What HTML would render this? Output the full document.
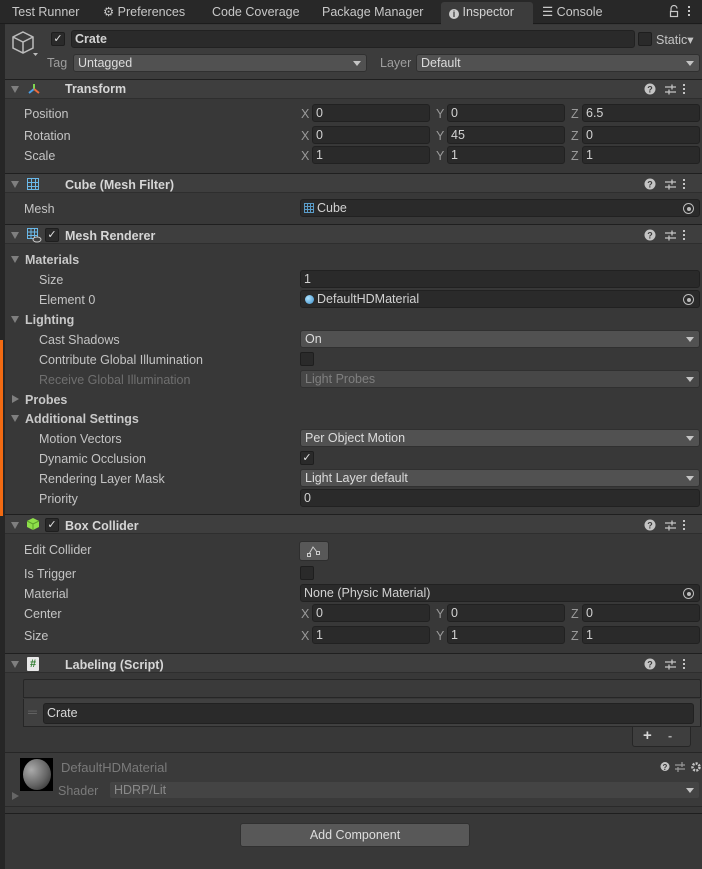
<!DOCTYPE html>
<html><head><meta charset="utf-8"><style>
*{margin:0;padding:0;box-sizing:border-box}
body{width:702px;height:869px;background:#383838;font-family:"Liberation Sans",sans-serif;font-size:12.5px;color:#c4c4c4;position:relative;overflow:hidden}
.a{position:absolute}
.t{position:absolute;white-space:nowrap;line-height:16px}
.b{font-weight:bold;color:#d6d6d6}
.f{position:absolute;height:18px;background:#2a2a2a;border:1px solid #212121;border-radius:3px;padding-left:3px;line-height:16px;color:#d2d2d2;white-space:nowrap}
.d{position:absolute;height:18px;background:#515151;border:1px solid #303030;border-radius:3px;padding-left:4px;line-height:16px;color:#dcdcdc;white-space:nowrap}
.d:after{content:"";position:absolute;right:5px;top:6px;border-left:4px solid transparent;border-right:4px solid transparent;border-top:5px solid #c4c4c4}
.h{position:absolute;left:5px;right:0;height:20px;background:#3e3e3e;border-top:1px solid #1f1f1f;border-bottom:1px solid #2e2e2e}
.tri{position:absolute;width:0;height:0;border-left:4px solid transparent;border-right:4px solid transparent;border-top:7px solid #7f7f7f}
.trr{position:absolute;width:0;height:0;border-top:4px solid transparent;border-bottom:4px solid transparent;border-left:7px solid #7f7f7f}
.cb{position:absolute;width:14px;height:14px;background:#2a2a2a;border:1px solid #1e1e1e;border-radius:2px;color:#e0e0e0;font-size:11px;line-height:12px;text-align:center}
.ic{position:absolute;left:644px}
.xl{position:absolute;color:#9a9a9a;line-height:16px}
.tgt{position:absolute;right:5px;top:3px;width:11px;height:11px;border:1px solid #bbb;border-radius:50%}
.tgt:after{content:"";position:absolute;left:2.5px;top:2.5px;width:4px;height:4px;background:#bbb;border-radius:50%}
</style></head><body>
<svg width="0" height="0" style="position:absolute"><defs>
<g id="hi"><circle cx="6" cy="6" r="5.5" fill="#c4c4c4"/><text x="6" y="9.5" font-family="Liberation Sans" font-size="9" font-weight="bold" fill="#3e3e3e" text-anchor="middle">?</text>
<g stroke="#c4c4c4" stroke-width="1.3"><path d="M21 4H32M21 9H32M28 1.5V6.5M25 6.5V11.5"/></g>
<g fill="#c4c4c4"><rect x="39" y="1" width="2" height="2"/><rect x="39" y="5" width="2" height="2"/><rect x="39" y="9" width="2" height="2"/></g></g>
</defs></svg>
<div class="a" style="left:0;top:24px;width:5px;height:845px;background:#262626"></div>
<div class="a" style="left:0;top:340px;width:3px;height:176px;background:#f26a12"></div>
<div class="a" style="left:0;top:0;width:702px;height:24px;background:#282828;border-bottom:1px solid #1c1c1c"></div>
<div class="t" style="left:12px;top:4px;color:#c8c8c8">Test Runner</div>
<div class="t" style="left:103px;top:4px;color:#c8c8c8">⚙ Preferences</div>
<div class="t" style="left:212px;top:4px;color:#c8c8c8">Code Coverage</div>
<div class="t" style="left:322px;top:4px;color:#c8c8c8">Package Manager</div>
<div class="a" style="left:441px;top:2px;width:92px;height:23px;background:#3c3c3c;border-radius:3px 3px 0 0"></div>
<div class="t" style="left:449px;top:4px;color:#d4d4d4"><span style="display:inline-block;width:10px;height:10px;border-radius:50%;background:#ccc;color:#3c3c3c;font-size:9px;line-height:10px;text-align:center;font-weight:bold;vertical-align:-1px">i</span> Inspector</div>
<div class="t" style="left:542px;top:4px;color:#c8c8c8">☰ Console</div>
<svg class="a" style="left:669px;top:5px" width="30" height="14" fill="none" stroke="#c8c8c8" stroke-width="1.2"><path d="M2 6V3.5a3 3 0 0 1 6 0"/><rect x="1.5" y="6.5" width="7" height="5"/><g fill="#c8c8c8" stroke="none"><rect x="19" y="1" width="2" height="2"/><rect x="19" y="5" width="2" height="2"/><rect x="19" y="9" width="2" height="2"/></g></svg>
<div class="a" style="left:5px;top:25px;width:697px;height:55px;background:#3c3c3c"></div>
<svg class="a" style="left:11px;top:30px" width="28" height="28" viewBox="0 0 28 28" fill="none" stroke="#bcbcbc" stroke-width="1.5"><path d="M12 2 L22 7 L22 18 L12 23 L2 18 L2 7 Z M2 7 L12 12 L22 7 M12 12 L12 23"/><path d="M22 23 l5 0 l-2.5 3z" fill="#bcbcbc" stroke="none"/></svg>
<div class="cb" style="left:51px;top:32px">✓</div>
<div class="f" style="left:71px;top:30px;width:564px;font-weight:bold">Crate</div>
<div class="cb" style="left:638px;top:32px"></div>
<div class="t" style="left:656px;top:32px;color:#c4c4c4">Static▾</div>
<div class="t" style="left:47px;top:55px;color:#9e9e9e">Tag</div>
<div class="d" style="left:73px;top:54px;width:294px">Untagged</div>
<div class="t" style="left:380px;top:55px;color:#9e9e9e">Layer</div>
<div class="d" style="left:416px;top:54px;width:284px">Default</div>
<!-- Transform -->
<div class="h" style="top:79px"></div>
<div class="tri" style="left:11px;top:86px"></div>
<svg class="a" style="left:27px;top:82px" width="14" height="14"><path d="M7 2 L7 7" stroke="#7fd650" stroke-width="2"/><path d="M7 7 L2 11" stroke="#4aa0e8" stroke-width="2"/><path d="M7 7 L12 11" stroke="#ee6c3c" stroke-width="2"/></svg>
<div class="t b" style="left:65px;top:81px">Transform</div>
<svg class="ic" style="top:83px" width="44" height="12"><use href="#hi"/></svg>
<div class="t" style="left:24px;top:106px">Position</div>
<div class="t" style="left:24px;top:128px">Rotation</div>
<div class="t" style="left:24px;top:148px">Scale</div>
<div class="xl" style="left:301px;top:106px">X</div><div class="f" style="left:312px;top:104px;width:118px">0</div>
<div class="xl" style="left:436px;top:106px">Y</div><div class="f" style="left:447px;top:104px;width:118px">0</div>
<div class="xl" style="left:571px;top:106px">Z</div><div class="f" style="left:582px;top:104px;width:118px">6.5</div>
<div class="xl" style="left:301px;top:128px">X</div><div class="f" style="left:312px;top:126px;width:118px">0</div>
<div class="xl" style="left:436px;top:128px">Y</div><div class="f" style="left:447px;top:126px;width:118px">45</div>
<div class="xl" style="left:571px;top:128px">Z</div><div class="f" style="left:582px;top:126px;width:118px">0</div>
<div class="xl" style="left:301px;top:148px">X</div><div class="f" style="left:312px;top:146px;width:118px">1</div>
<div class="xl" style="left:436px;top:148px">Y</div><div class="f" style="left:447px;top:146px;width:118px">1</div>
<div class="xl" style="left:571px;top:148px">Z</div><div class="f" style="left:582px;top:146px;width:118px">1</div>
<!-- Mesh Filter -->
<div class="h" style="top:173px"></div>
<div class="tri" style="left:11px;top:181px"></div>
<svg class="a" style="left:26px;top:177px" width="14" height="14" fill="none" stroke="#6ab8e8" stroke-width="1"><rect x="1.5" y="1.5" width="11" height="11"/><path d="M5.5 1.5V12.5M9.5 1.5V12.5M1.5 5.5H12.5M1.5 9.5H12.5"/></svg>
<div class="t b" style="left:65px;top:177px">Cube (Mesh Filter)</div>
<svg class="ic" style="top:178px" width="44" height="12"><use href="#hi"/></svg>
<div class="t" style="left:24px;top:201px">Mesh</div>
<div class="f" style="left:300px;top:199px;width:400px;padding-left:16px"><svg class="a" style="left:3px;top:3px" width="10" height="10" fill="none" stroke="#5a9cc8" stroke-width="1"><rect x=".5" y=".5" width="9" height="9"/><path d="M3.5 0V10M6.5 0V10M0 3.5H10M0 6.5H10"/></svg>Cube<div class="tgt"></div></div>
<!-- Mesh Renderer -->
<div class="h" style="top:224px"></div>
<div class="tri" style="left:11px;top:232px"></div>
<svg class="a" style="left:26px;top:227px" width="16" height="16" fill="none" stroke="#6ab8e8" stroke-width="1"><rect x="1.5" y="1.5" width="10" height="10"/><path d="M5 1.5V11.5M8.5 1.5V11.5M1.5 5H11.5M1.5 8.5H11.5"/><ellipse cx="11" cy="12.5" rx="4" ry="2.5" stroke="#ccc" fill="#3e3e3e"/></svg>
<div class="cb" style="left:45px;top:228px">✓</div>
<div class="t b" style="left:65px;top:228px">Mesh Renderer</div>
<svg class="ic" style="top:229px" width="44" height="12"><use href="#hi"/></svg>
<div class="tri" style="left:11px;top:256px"></div><div class="t b" style="left:25px;top:252px;color:#c8c8c8">Materials</div>
<div class="t" style="left:39px;top:272px">Size</div>
<div class="f" style="left:300px;top:270px;width:400px">1</div>
<div class="t" style="left:39px;top:292px">Element 0</div>
<div class="f" style="left:300px;top:290px;width:400px;padding-left:16px"><span class="a" style="left:4px;top:4px;width:9px;height:9px;border-radius:50%;background:radial-gradient(circle at 35% 35%,#aee4ff,#3a8cc8)"></span>DefaultHDMaterial<div class="tgt"></div></div>
<div class="tri" style="left:11px;top:316px"></div><div class="t b" style="left:25px;top:312px;color:#c8c8c8">Lighting</div>
<div class="t" style="left:39px;top:332px">Cast Shadows</div>
<div class="d" style="left:300px;top:330px;width:400px">On</div>
<div class="t" style="left:39px;top:352px">Contribute Global Illumination</div>
<div class="cb" style="left:300px;top:352px"></div>
<div class="t" style="left:39px;top:372px;color:#6f6f6f">Receive Global Illumination</div>
<div class="d" style="left:300px;top:370px;width:400px;background:#474747;color:#7f7f7f">Light Probes</div>
<div class="trr" style="left:12px;top:395px"></div><div class="t b" style="left:25px;top:392px;color:#c8c8c8">Probes</div>
<div class="tri" style="left:11px;top:415px"></div><div class="t b" style="left:25px;top:411px;color:#c8c8c8">Additional Settings</div>
<div class="t" style="left:39px;top:431px">Motion Vectors</div>
<div class="d" style="left:300px;top:429px;width:400px">Per Object Motion</div>
<div class="t" style="left:39px;top:451px">Dynamic Occlusion</div>
<div class="cb" style="left:300px;top:451px">✓</div>
<div class="t" style="left:39px;top:471px">Rendering Layer Mask</div>
<div class="d" style="left:300px;top:469px;width:400px">Light Layer default</div>
<div class="t" style="left:39px;top:491px">Priority</div>
<div class="f" style="left:300px;top:489px;width:400px">0</div>
<!-- Box Collider -->
<div class="h" style="top:514px"></div>
<div class="tri" style="left:11px;top:522px"></div>
<svg class="a" style="left:26px;top:517px" width="14" height="14"><path d="M7 1 L13 4 L13 10 L7 13 L1 10 L1 4Z" fill="#8ee04a"/><path d="M1 4 L7 7 L13 4 M7 7 V13" stroke="#5aa02a" fill="none"/></svg>
<div class="cb" style="left:45px;top:518px">✓</div>
<div class="t b" style="left:65px;top:518px">Box Collider</div>
<svg class="ic" style="top:519px" width="44" height="12"><use href="#hi"/></svg>
<div class="t" style="left:24px;top:542px">Edit Collider</div>
<div class="a" style="left:299px;top:541px;width:30px;height:20px;background:#585858;border-radius:3px;border:1px solid #2e2e2e"><svg width="28" height="18" fill="none" stroke="#ccc"><path d="M9 12 L13 5 L17 10"/><rect x="7.5" y="11.5" width="3" height="3"/><rect x="16.5" y="9.5" width="3" height="3"/></svg></div>
<div class="t" style="left:24px;top:566px">Is Trigger</div>
<div class="cb" style="left:300px;top:566px"></div>
<div class="t" style="left:24px;top:586px">Material</div>
<div class="f" style="left:300px;top:584px;width:400px">None (Physic Material)<div class="tgt"></div></div>
<div class="t" style="left:24px;top:606px">Center</div>
<div class="t" style="left:24px;top:628px">Size</div>
<div class="xl" style="left:301px;top:606px">X</div><div class="f" style="left:312px;top:604px;width:118px">0</div>
<div class="xl" style="left:436px;top:606px">Y</div><div class="f" style="left:447px;top:604px;width:118px">0</div>
<div class="xl" style="left:571px;top:606px">Z</div><div class="f" style="left:582px;top:604px;width:118px">0</div>
<div class="xl" style="left:301px;top:628px">X</div><div class="f" style="left:312px;top:626px;width:118px">1</div>
<div class="xl" style="left:436px;top:628px">Y</div><div class="f" style="left:447px;top:626px;width:118px">1</div>
<div class="xl" style="left:571px;top:628px">Z</div><div class="f" style="left:582px;top:626px;width:118px">1</div>
<!-- Labeling -->
<div class="h" style="top:653px"></div>
<div class="tri" style="left:11px;top:661px"></div>
<div class="a" style="left:27px;top:657px;width:12px;height:14px;background:#e8e8e8;border-radius:1px;color:#2c7a2c;font-size:11px;font-weight:bold;line-height:14px;text-align:center">#</div>
<div class="t b" style="left:65px;top:657px">Labeling (Script)</div>
<svg class="ic" style="top:658px" width="44" height="12"><use href="#hi"/></svg>
<div class="a" style="left:23px;top:679px;width:678px;height:19px;background:#3a3a3a;border:1px solid #262626;border-radius:2px 2px 0 0"></div>
<div class="a" style="left:23px;top:699px;width:678px;height:28px;background:#404040;border:1px solid #262626;border-top:none"></div>
<div class="t" style="left:28px;top:704px;color:#666">═</div>
<div class="f" style="left:43px;top:703px;width:651px;height:21px;line-height:19px;color:#d8d8d8">Crate</div>
<div class="a" style="left:632px;top:727px;width:59px;height:20px;background:#3e3e3e;border:1px solid #262626;border-top:none;border-radius:0 0 3px 3px"></div>
<div class="t" style="left:643px;top:728px;color:#d8d8d8;font-weight:bold;font-size:15px">+</div>
<div class="t" style="left:668px;top:728px;color:#aaa;font-weight:bold">-</div>
<!-- material -->
<div class="a" style="left:5px;top:752px;width:697px;height:1px;background:#262626"></div>
<div class="a" style="left:5px;top:753px;width:697px;height:53px;background:#3a3a3a"></div>
<div class="a" style="left:20px;top:758px;width:33px;height:33px;background:#000"><div class="a" style="left:3px;top:1px;width:28px;height:31px;border-radius:50%;background:radial-gradient(circle at 30% 35%,#aaa,#666 55%,#222)"></div></div>
<div class="trr" style="left:12px;top:792px;border-left-color:#666"></div>
<div class="t" style="left:61px;top:760px;color:#7a7a7a;font-size:13px">DefaultHDMaterial</div>
<svg class="a" style="left:660px;top:761px" width="42" height="12"><circle cx="5" cy="5.5" r="4.5" fill="#c4c4c4"/><text x="5" y="9" font-family="Liberation Sans" font-size="8" font-weight="bold" fill="#3a3a3a" text-anchor="middle">?</text><g stroke="#999" stroke-width="1.2"><path d="M15 4H25M15 8H25M22 1V6M18 6V11"/></g><circle cx="36" cy="6" r="3.5" fill="none" stroke="#c4c4c4" stroke-width="2.5" stroke-dasharray="2 1.2"/></svg>
<div class="t" style="left:58px;top:783px;color:#7a7a7a">Shader</div>
<div class="d" style="left:109px;top:781px;width:591px;background:#444;border-color:#3a3a3a;color:#8a8a8a">HDRP/Lit</div>
<div class="a" style="left:5px;top:806px;width:697px;height:1px;background:#2a2a2a"></div>
<div class="a" style="left:5px;top:813px;width:697px;height:1px;background:#1e1e1e"></div>
<div class="a" style="left:240px;top:823px;width:230px;height:24px;background:#585858;border:1px solid #303030;border-radius:3px;text-align:center;line-height:22px;color:#dedede">Add Component</div>
</body></html>
